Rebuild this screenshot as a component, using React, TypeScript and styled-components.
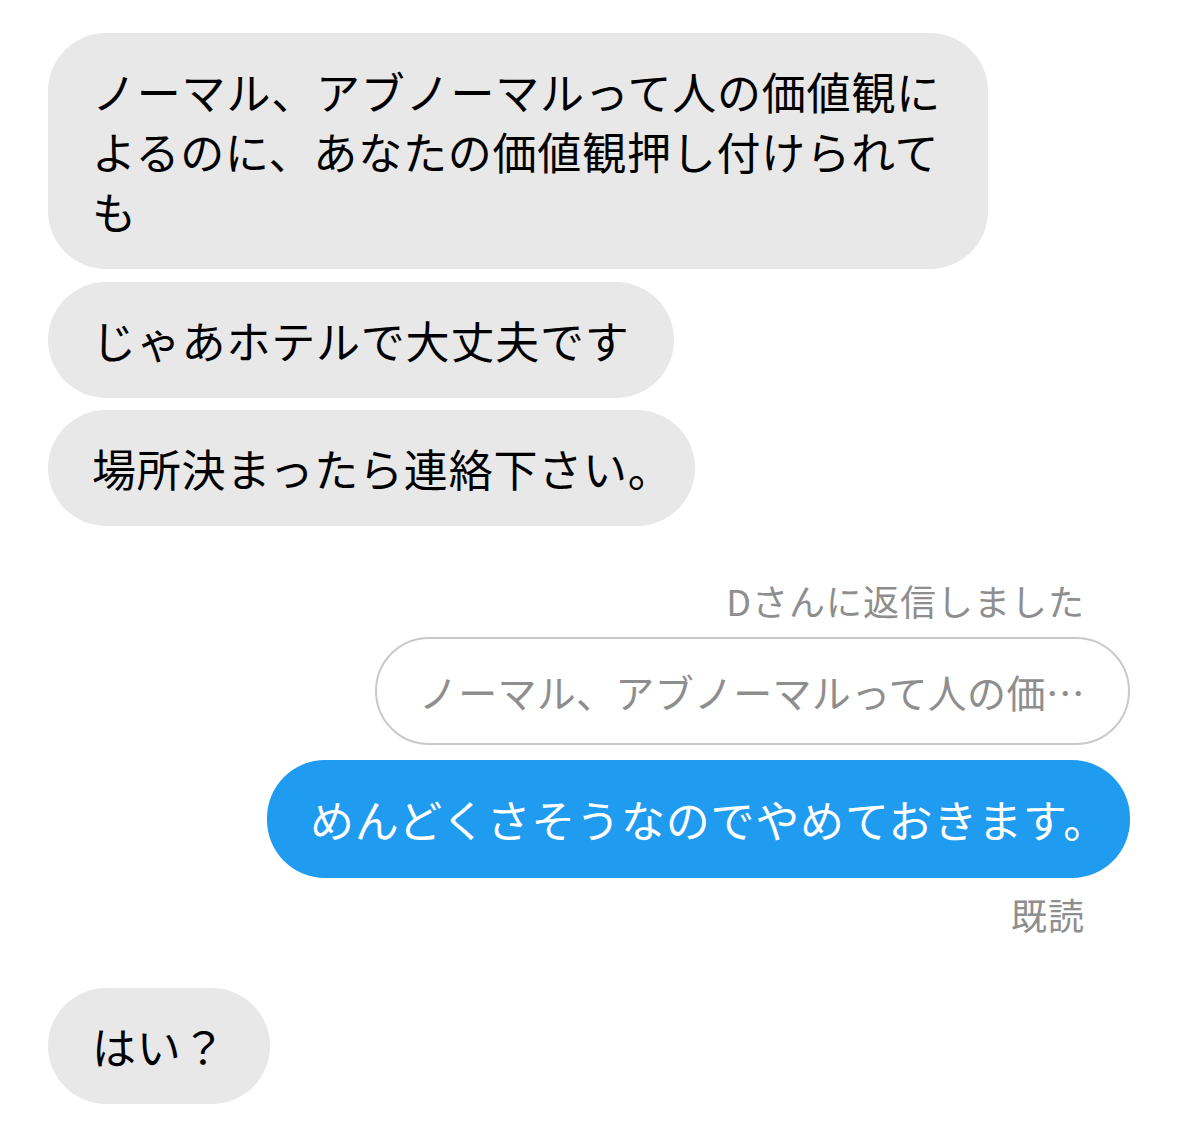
import React from "react";
import styled, { createGlobalStyle } from "styled-components";

const GlobalStyle = createGlobalStyle`
  html, body {
    margin: 0;
    padding: 0;
    background: #ffffff;
  }
  body {
    font-family: "Noto Sans CJK JP", "Noto Sans", sans-serif;
    -webkit-font-smoothing: antialiased;
  }
`;

const Thread = styled.div`
  width: 1179px;
  min-height: 1141px;
  box-sizing: border-box;
  padding: 33px 49px 0 48px;
  display: flex;
  flex-direction: column;
  align-items: flex-start;
`;

const Bubble = styled.div<{ $mine?: boolean; $gap?: number; $single?: boolean }>`
  box-sizing: border-box;
  max-width: 940px;
  margin-top: ${(p) => p.$gap ?? 0}px;
  padding: ${(p) => (p.$mine ? "29px 44px 29px 43px" : "28px 44px")};
  border-radius: 58px;
  background: ${(p) => (p.$mine ? "#1f9bf0" : "#e8e8e8")};
  color: ${(p) => (p.$mine ? "#ffffff" : "#000000")};
  align-self: ${(p) => (p.$mine ? "flex-end" : "flex-start")};
  font-size: 44px;
  line-height: 60px;
  letter-spacing: 0.8px;
  white-space: ${(p) => (p.$single ? "nowrap" : "normal")};
`;

// line-end "。" sits half-width, like the native chat view
const Trim = styled.span`
  margin-right: -0.5em;
`;

const Meta = styled.div<{ $gap: number }>`
  align-self: flex-end;
  margin-top: ${(p) => p.$gap}px;
  padding-right: 45px;
  color: #8e8e8e;
  font-size: 36px;
  line-height: 44px;
  letter-spacing: 1px;
`;

const Quote = styled.div`
  align-self: flex-end;
  box-sizing: border-box;
  margin-top: 15px;
  padding: 27px 43px 27px 42px;
  border: 2px solid #c9c9c9;
  border-radius: 54px;
  color: #8e8e8e;
  font-size: 39px;
  line-height: 50px;
  letter-spacing: 0.3px;
  white-space: nowrap;
`;

export default function App() {
  return (
    <>
      <GlobalStyle />
      <Thread>
        <Bubble>
          ノーマル、アブノーマルって人の価値観によるのに、あなたの価値観押し付けられても
        </Bubble>
        <Bubble $single $gap={13}>
          じゃあホテルで大丈夫です
        </Bubble>
        <Bubble $single $gap={12}>
          場所決まったら連絡下さい<Trim>。</Trim>
        </Bubble>
        <Meta $gap={52}>Dさんに返信しました</Meta>
        <Quote>ノーマル、アブノーマルって人の価…</Quote>
        <Bubble $mine $single $gap={15}>
          めんどくさそうなのでやめておきます<Trim>。</Trim>
        </Bubble>
        <Meta $gap={14}>既読</Meta>
        <Bubble $single $gap={52}>
          はい？
        </Bubble>
      </Thread>
    </>
  );
}
